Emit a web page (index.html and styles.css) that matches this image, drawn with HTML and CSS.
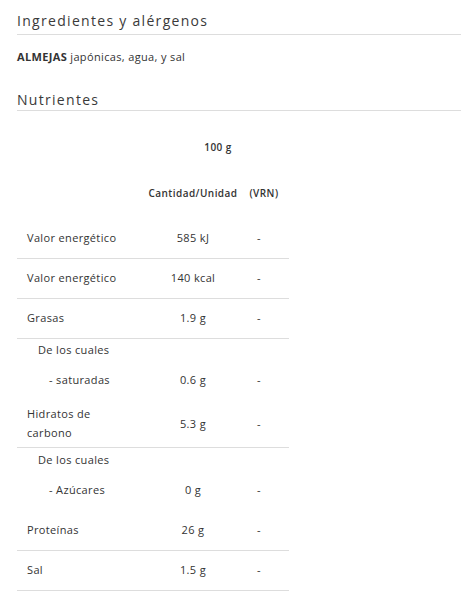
FILE: index.html
```html
<!DOCTYPE html>
<html lang="es">
<head>
<meta charset="utf-8">
<link rel="stylesheet" href="styles.css">
</head>
<body>
<section class="block">
  <h2 class="section-title">Ingredientes y alérgenos</h2>
  <p class="ingredients"><strong>ALMEJAS</strong> japónicas, agua, y sal</p>
</section>
<section class="block">
  <h2 class="section-title tight">Nutrientes</h2>
  <table class="nutri">
    <colgroup><col class="c1"><col class="c2"><col class="c3"></colgroup>
    <tr class="head1"><td></td><th colspan="2">100 g</th></tr>
    <tr class="head2"><td></td><th>Cantidad/Unidad</th><th>(VRN)</th></tr>
    <tr class="row line"><td class="name">Valor energético</td><td class="val">585 kJ</td><td class="vrn">-</td></tr>
    <tr class="row line"><td class="name">Valor energético</td><td class="val">140 kcal</td><td class="vrn">-</td></tr>
    <tr class="row line"><td class="name">Grasas</td><td class="val">1.9 g</td><td class="vrn">-</td></tr>
    <tr class="sub"><td class="name sub1">De los cuales</td><td></td><td></td></tr>
    <tr class="row"><td class="name sub2">- saturadas</td><td class="val">0.6 g</td><td class="vrn">-</td></tr>
    <tr class="tall line"><td class="name">Hidratos de<br>carbono</td><td class="val">5.3 g</td><td class="vrn">-</td></tr>
    <tr class="sub sub-b"><td class="name sub1">De los cuales</td><td></td><td></td></tr>
    <tr class="row"><td class="name sub2">- Azúcares</td><td class="val">0 g</td><td class="vrn">-</td></tr>
    <tr class="row line"><td class="name">Proteínas</td><td class="val">26 g</td><td class="vrn">-</td></tr>
    <tr class="row line"><td class="name">Sal</td><td class="val">1.5 g</td><td class="vrn">-</td></tr>
  </table>
</section>
</body>
</html>
```
FILE: styles.css
```css
html, body {
  margin: 0;
  padding: 0;
  background: #fff;
}
body {
  padding: 11px 0 0 17px;
  font-family: "Open Sans", "Liberation Sans", sans-serif;
  color: #333;
  font-size: 11px;
  letter-spacing: 0.35px;
}
.section-title {
  margin: 0;
  font-size: 14px;
  font-weight: 400;
  letter-spacing: 1.3px;
  line-height: 20px;
  padding-bottom: 3px;
  border-bottom: 1px solid #ddd;
  color: #3a3a3a;
}
.section-title.tight {
  padding-bottom: 0;
}
.ingredients {
  margin: 0;
  padding: 12px 0 0;
  line-height: 19px;
  height: 43px;
}
.ingredients strong {
  font-weight: 700;
}
.nutri {
  border-collapse: separate;
  border-spacing: 0;
  width: 272px;
  table-layout: fixed;
}
.c1 { width: 130px; }
.c2 { width: 92px; }
.c3 { width: 50px; }
.nutri td, .nutri th {
  padding: 0;
  line-height: 19px;
  vertical-align: middle;
}
.nutri th {
  font-size: 10px;
  font-weight: 600;
  letter-spacing: 0.45px;
  text-align: center;
}
.head1 th, .head1 td { padding: 27px 0 18px; }
.head2 th, .head2 td { padding: 9px 0 16px; }
.row td { padding: 9px 0 12px; }
.line td { padding-bottom: 11px; border-bottom: 1px solid #ddd; }
.tall td { padding: 3px 0 5px; }
.sub td { padding: 1px 0 2px; }
.sub-b td { padding: 2px 0 2px; }
.name { padding-left: 10px !important; }
.sub1 { padding-left: 21px !important; }
.sub2 { padding-left: 32px !important; }
.val { text-align: center; }
.vrn { text-align: center; padding-right: 10px !important; }
```
